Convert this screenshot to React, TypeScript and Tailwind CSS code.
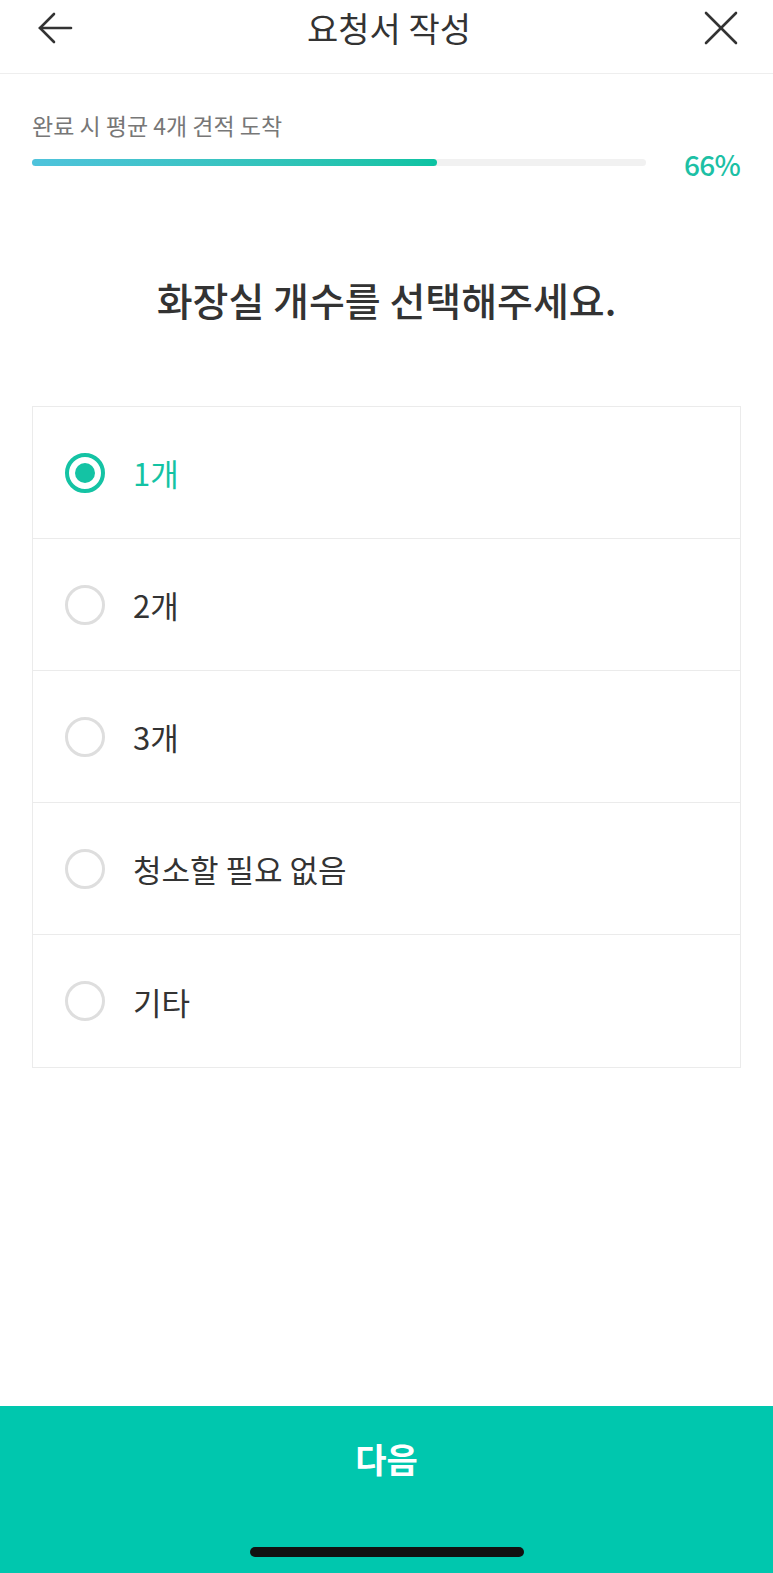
import { useState } from "react";

const options = ["1개", "2개", "3개", "청소할 필요 없음", "기타"];

const App = () => {
  const [selected, setSelected] = useState<number>(0);

  return (
    <div
      className="flex h-[1573px] w-[773px] flex-col overflow-hidden bg-white text-[#333]"
      style={{ fontFamily: '"Noto Sans CJK KR", "Noto Sans", sans-serif' }}
    >
      <header className="flex h-[74px] shrink-0 items-center justify-between border-b border-[#eeeeee] pr-[35px] pl-[36px] pb-[18px]">
        <svg width="38" height="34" viewBox="0 0 38 34" fill="none" stroke="#333" strokeWidth="2.6" strokeLinecap="round">
          <path d="M35 17H4" />
          <path d="M18 3L4 17l14 14" />
        </svg>
        <h1 className="text-[34px] leading-none font-normal">요청서 작성</h1>
        <svg width="34" height="34" viewBox="0 0 34 34" fill="none" stroke="#333" strokeWidth="2.6" strokeLinecap="round">
          <path d="M2 2l30 30" />
          <path d="M32 2L2 32" />
        </svg>
      </header>

      <section className="px-[32px] pt-[40px]">
        <p className="text-[23px] leading-none text-[#777]">완료 시 평균 4개 견적 도착</p>
        <div className="mt-[10px] flex items-center">
          <div className="h-[7px] w-[614px] rounded-full bg-[#f1f1f1]">
            <div className="h-full w-[66%] rounded-full bg-gradient-to-r from-[#4fc3dc] to-[#0bc3a2]" />
          </div>
          <span className="ml-auto pt-[3px] pr-[1px] text-[28px] leading-none font-medium tracking-tight text-[#1cc0a5]">
            66%
          </span>
        </div>
      </section>

      <h2 className="mt-[102px] text-center text-[39px] leading-none font-medium">
        화장실 개수를 선택해주세요.
      </h2>

      <ul className="mx-[32px] mt-[87px] border border-[#ebebeb]">
        {options.map((label, i) => {
          const active = selected === i;
          return (
            <li
              key={label}
              onClick={() => setSelected(i)}
              className="flex h-[132px] cursor-pointer items-center border-b border-[#ebebeb] pl-[32px] last:border-b-0"
            >
              {active ? (
                <span className="flex h-[40px] w-[40px] items-center justify-center rounded-full border-[4px] border-[#14c3a4]">
                  <span className="h-[20px] w-[20px] rounded-full bg-[#14c3a4]" />
                </span>
              ) : (
                <span className="h-[40px] w-[40px] rounded-full border-[3px] border-[#dedede]" />
              )}
              <span
                className={`ml-[28px] text-[31px] leading-none ${
                  active ? "text-[#14c3a4]" : "text-[#333]"
                }`}
              >
                {label}
              </span>
            </li>
          );
        })}
      </ul>

      <div className="flex-1" />

      <footer className="flex h-[167px] shrink-0 flex-col items-center bg-[#00c7ae]">
        <span className="mt-[36px] text-[34px] leading-none font-bold text-white">다음</span>
        <div className="mt-auto mb-[16px] h-[10px] w-[274px] rounded-full bg-[#111]" />
      </footer>
    </div>
  );
};

export default App;
